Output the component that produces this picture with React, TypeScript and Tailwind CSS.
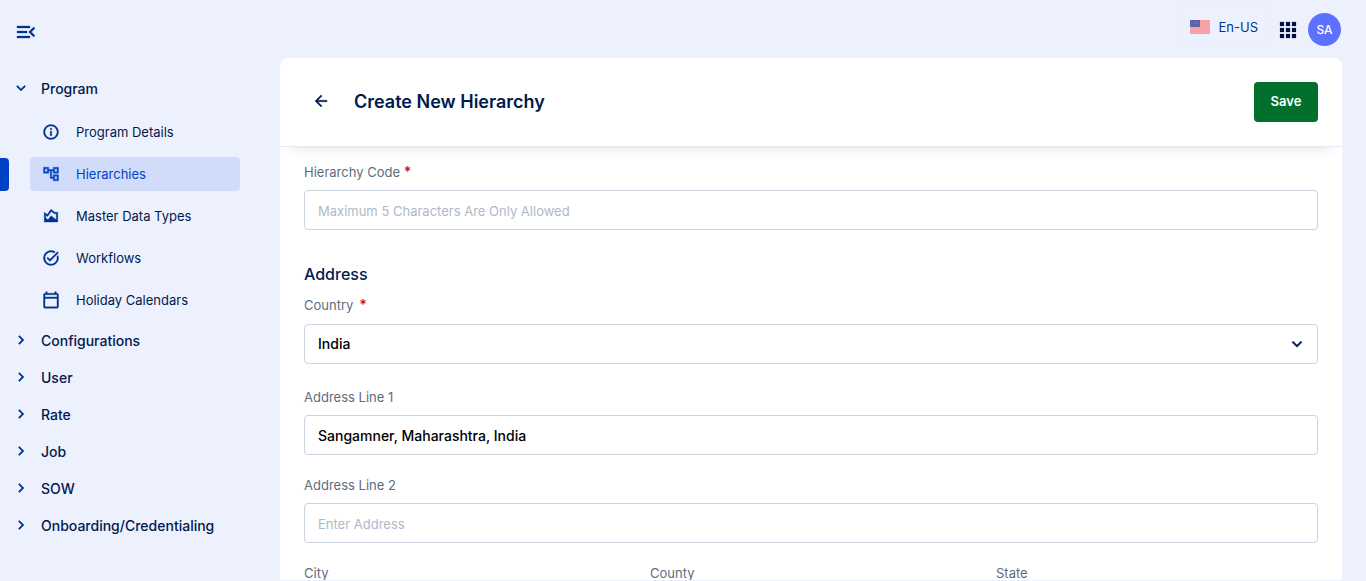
import { useState } from "react";
import type { IconType } from "react-icons";
import {
  MdApps,
  MdArrowBack,
  MdChevronRight,
  MdExpandMore,
  MdMenuOpen,
  MdOutlineAccountTree,
  MdOutlineAreaChart,
  MdOutlineCalendarToday,
  MdOutlineInfo,
  MdTaskAlt,
} from "react-icons/md";

const programLinks: { label: string; icon: IconType; active?: boolean }[] = [
  { label: "Program Details", icon: MdOutlineInfo },
  { label: "Hierarchies", icon: MdOutlineAccountTree, active: true },
  { label: "Master Data Types", icon: MdOutlineAreaChart },
  { label: "Workflows", icon: MdTaskAlt },
  { label: "Holiday Calendars", icon: MdOutlineCalendarToday },
];

const groups = ["Configurations", "User", "Rate", "Job", "SOW", "Onboarding/Credentialing"];

function Flag() {
  return (
    <svg width="20" height="14" viewBox="0 0 20 14" aria-hidden="true">
      <rect width="20" height="14" fill="#ff9a9e" />
      {[2, 4, 6, 8, 10, 12].map((y) => (
        <rect key={y} y={y} width="20" height="1" fill="#fba6ac" />
      ))}
      <rect width="10" height="7" fill="#5a5fa8" />
      {[1, 3, 5].map((y) =>
        [1, 3, 5, 7].map((x) => (
          <rect key={`${x}-${y}`} x={x} y={y} width="1" height="1" fill="#7579b8" />
        )),
      )}
    </svg>
  );
}

function Sidebar() {
  return (
    <aside className="w-[280px] shrink-0">
      <button type="button" aria-label="Collapse menu" className="ml-3.5 mt-5 block text-[#00348f]">
        <MdMenuOpen size={24} strokeWidth={0.3} />
      </button>
      <nav className="mt-[26px]">
        <button
          type="button"
          aria-expanded="true"
          className="flex h-[37px] items-center gap-[11px] pl-3 text-sm font-medium text-[#001a4d]"
        >
          <MdExpandMore size={18} strokeWidth={0.6} className="mb-0.5 text-[#00348f]" />
          Program
        </button>
        <ul className="mb-[5px] mt-2 flex flex-col gap-2">
          {programLinks.map(({ label, icon: Icon, active }) => (
            <li key={label} className="flex items-center">
              <span className={active ? "h-[33px] w-[9px] rounded-r bg-[#0042c7]" : "w-[9px]"} />
              <a
                href="#"
                aria-current={active ? "page" : undefined}
                className={
                  active
                    ? "ml-[21px] mr-10 flex h-[34px] flex-1 items-center gap-4 rounded bg-[#d1dcfa] pl-3 text-[13px] leading-5 text-[#0042c7]"
                    : "ml-[21px] mr-10 flex h-[34px] flex-1 items-center gap-4 rounded pl-3 text-[13px] leading-5 text-[#001a4d]"
                }
              >
                <Icon
                  size={18}
                  strokeWidth={0.5}
                  className={active ? "overflow-visible text-[#0042c7]" : "overflow-visible text-[#00348f]"}
                />
                {label}
              </a>
            </li>
          ))}
        </ul>
        {groups.map((name) => (
          <button
            key={name}
            type="button"
            aria-expanded="false"
            className="flex h-[37px] w-full items-center gap-[11px] pl-3 text-sm font-medium text-[#001a4d]"
          >
            <MdChevronRight size={18} strokeWidth={0.6} className="mb-0.5 text-[#00348f]" />
            {name}
          </button>
        ))}
      </nav>
    </aside>
  );
}

const inputClass =
  "h-10 w-full rounded border border-[#cbd3e0] bg-white px-[13px] text-sm font-medium text-black outline-none placeholder:text-[13px] placeholder:font-normal placeholder:text-[#afb9c6]";

function Field({
  id,
  label,
  placeholder,
  initial = "",
  required = false,
}: {
  id: string;
  label: string;
  placeholder?: string;
  initial?: string;
  required?: boolean;
}) {
  const [value, setValue] = useState(initial);
  return (
    <div className="flex flex-col gap-2">
      <label htmlFor={id} className="text-[13px] leading-5 text-[#5f6c7e]">
        {label} {required && <span className="text-sm font-semibold leading-5 text-[#c8102e]">*</span>}
      </label>
      <input
        id={id}
        type="text"
        required={required}
        placeholder={placeholder}
        value={value}
        onChange={(e) => setValue(e.target.value)}
        className={inputClass}
      />
    </div>
  );
}

export default function App() {
  const [country, setCountry] = useState("India");
  return (
    <div className="flex h-screen overflow-hidden bg-[#edf1fe] font-['Inter',sans-serif] [&_path[fill=none]]:stroke-none">
      <Sidebar />
      <div className="flex min-w-0 flex-1 flex-col pb-px pr-6">
        <header className="flex h-[58px] shrink-0 items-start justify-end">
          <button
            type="button"
            className="mt-[7px] flex h-10 items-center gap-[9px] rounded border border-[#eaeefa] px-3 text-[13px] leading-5 text-[#00348f]"
          >
            <Flag />
            En-US
          </button>
          <button type="button" aria-label="Applications" className="ml-[5px] mt-[18px] text-[#00103f]">
            <MdApps size={24} strokeWidth={0.2} />
          </button>
          <button
            type="button"
            aria-label="Account"
            className="ml-2 mr-px mt-[13px] size-[33px] rounded-full bg-[#5e70ff] text-xs font-medium text-white"
          >
            SA
          </button>
        </header>
        <main className="flex min-h-0 flex-1 flex-col overflow-hidden rounded-t-lg bg-white">
          <div className="relative flex h-[89px] shrink-0 items-center border-b border-[#e6ebf3] px-6 shadow-[0_12px_12px_-12px_rgba(0,0,0,0.14)]">
            <button type="button" aria-label="Back" className="mb-0.5 ml-2 text-[#001a4d]">
              <MdArrowBack size={18} strokeWidth={0.5} />
            </button>
            <h1 className="ml-6 text-lg font-semibold text-[#001a4d]">Create New Hierarchy</h1>
            <button
              type="submit"
              form="hierarchy"
              className="ml-auto h-10 w-16 rounded bg-[#00702c] text-[13px] font-semibold text-white"
            >
              Save
            </button>
          </div>
          <form
            id="hierarchy"
            onSubmit={(e) => e.preventDefault()}
            className="min-h-0 flex-1 overflow-y-auto px-6 pb-6 pt-[15px] [scrollbar-width:none]"
          >
            <Field id="code" label="Hierarchy Code" placeholder="Maximum 5 Characters Are Only Allowed" required />
            <h2 className="mt-8 text-base font-medium leading-6 text-[#001a4d]">Address</h2>
            <div className="mt-[9px] flex flex-col gap-[9px]">
              <label htmlFor="country" className="flex gap-1.5 text-[13px] leading-5 text-[#5f6c7e]">
                Country <span className="text-sm font-semibold leading-5 text-[#c8102e]">*</span>
              </label>
              <div className="relative">
                <select
                  id="country"
                  value={country}
                  onChange={(e) => setCountry(e.target.value)}
                  className={`${inputClass} appearance-none`}
                >
                  <option>India</option>
                </select>
                <MdExpandMore
                  size={20}
                  strokeWidth={0.6}
                  className="pointer-events-none absolute right-[11px] top-[10px] text-[#001a4d]"
                />
              </div>
            </div>
            <div className="mt-[23px] flex flex-col gap-5">
              <Field id="address1" label="Address Line 1" initial="Sangamner, Maharashtra, India" />
              <Field id="address2" label="Address Line 2" placeholder="Enter Address" />
              <div className="grid grid-cols-3 gap-6">
                <Field id="city" label="City" />
                <Field id="county" label="County" />
                <Field id="state" label="State" />
              </div>
            </div>
          </form>
        </main>
      </div>
    </div>
  );
}
